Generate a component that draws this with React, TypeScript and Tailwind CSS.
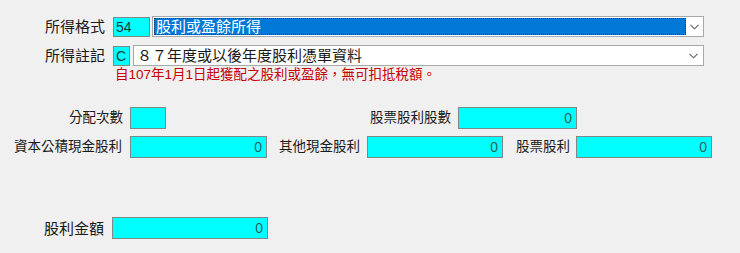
const font = { fontFamily: '"Liberation Sans", "Noto Sans CJK TC", sans-serif' }

function Chevron() {
  return (
    <svg width="9" height="6" viewBox="0 0 9 6" className="shrink-0">
      <path d="M0.5 0.8 L4.5 4.8 L8.5 0.8" fill="none" stroke="#606060" strokeWidth="1.1" />
    </svg>
  )
}

function NumBox({ w, value = '0' }: { w: string; value?: string }) {
  return (
    <div
      className={`${w} h-[22px] bg-[#00ffff] border border-[#7a8a8a] flex items-center justify-end pr-[4px] text-[14px] text-[#2d5e5e] leading-none`}
    >
      {value}
    </div>
  )
}

function Label({ w, children }: { w: string; children: string }) {
  return <div className={`${w} text-right text-[13.5px] text-[#1a1a1a] leading-none whitespace-nowrap`}>{children}</div>
}

export default function App() {
  return (
    <div className="w-[740px] h-[253px] bg-[#f0f0f0] pt-[16px] overflow-hidden" style={font}>
      {/* 所得格式 */}
      <div className="flex items-center h-[21px]">
        <div className="w-[105px] text-right text-[15px] text-[#1a1a1a] leading-none">所得格式</div>
        <div className="ml-[8px] w-[37px] h-[20px] bg-[#00ffff] border border-[#7a8a8a] flex items-center pl-[2px] text-[14px] text-[#1a3a3a] leading-none">
          54
        </div>
        <div className="ml-[2px] w-[552px] h-[21px] bg-white border border-[#a8a8a8] flex items-center">
          <div className="ml-[1px] w-[532px] h-[17px] bg-[#0078d7] border border-dotted border-[#3a3a3a] flex items-center pl-[1px] text-[15px] text-white leading-none">
            股利或盈餘所得
          </div>
          <div className="flex-1 flex justify-center">
            <Chevron />
          </div>
        </div>
      </div>

      {/* 所得註記 */}
      <div className="flex items-center h-[21px] mt-[8px]">
        <div className="w-[105px] text-right text-[15px] text-[#1a1a1a] leading-none">所得註記</div>
        <div className="ml-[8px] w-[17px] h-[20px] bg-[#00ffff] border border-[#7a8a8a] flex items-center pl-[2px] text-[14px] text-[#1a3a3a] leading-none">
          C
        </div>
        <div className="ml-[3px] w-[571px] h-[21px] bg-white border border-[#a8a8a8] flex items-center">
          <div className="flex-1 pl-[3px] text-[15px] text-[#1a1a1a] leading-none">８７年度或以後年度股利憑單資料</div>
          <div className="w-[19px] flex justify-center">
            <Chevron />
          </div>
        </div>
      </div>

      <div className="pl-[115px] mt-[1px] h-[14px] text-[13.5px] leading-[15px] text-[#c80000] whitespace-nowrap">
        自107年1月1日起獲配之股利或盈餘，無可扣抵稅額。
      </div>

      {/* 分配次數 / 股票股利股數 */}
      <div className="flex items-center h-[22px] mt-[26px]">
        <Label w="w-[123px]">分配次數</Label>
        <div className="ml-[7px] w-[36px] h-[22px] bg-[#00ffff] border border-[#7a8a8a]" />
        <div className="ml-[204px]">
          <Label w="w-[81px]">股票股利股數</Label>
        </div>
        <div className="ml-[7px]">
          <NumBox w="w-[119px]" />
        </div>
      </div>

      {/* 資本公積現金股利 / 其他現金股利 / 股票股利 */}
      <div className="flex items-center h-[22px] mt-[7px]">
        <Label w="w-[122px]">資本公積現金股利</Label>
        <div className="ml-[8px]">
          <NumBox w="w-[137px]" />
        </div>
        <div className="ml-[12px]">
          <Label w="w-[81px]">其他現金股利</Label>
        </div>
        <div className="ml-[7px]">
          <NumBox w="w-[136px]" />
        </div>
        <div className="ml-[13px]">
          <Label w="w-[54px]">股票股利</Label>
        </div>
        <div className="ml-[6px]">
          <NumBox w="w-[136px]" />
        </div>
      </div>

      {/* 股利金額 */}
      <div className="flex items-center h-[22px] mt-[59px]">
        <div className="w-[104px] text-right text-[15px] text-[#1a1a1a] leading-none">股利金額</div>
        <div className="ml-[8px]">
          <NumBox w="w-[156px]" />
        </div>
      </div>
    </div>
  )
}
